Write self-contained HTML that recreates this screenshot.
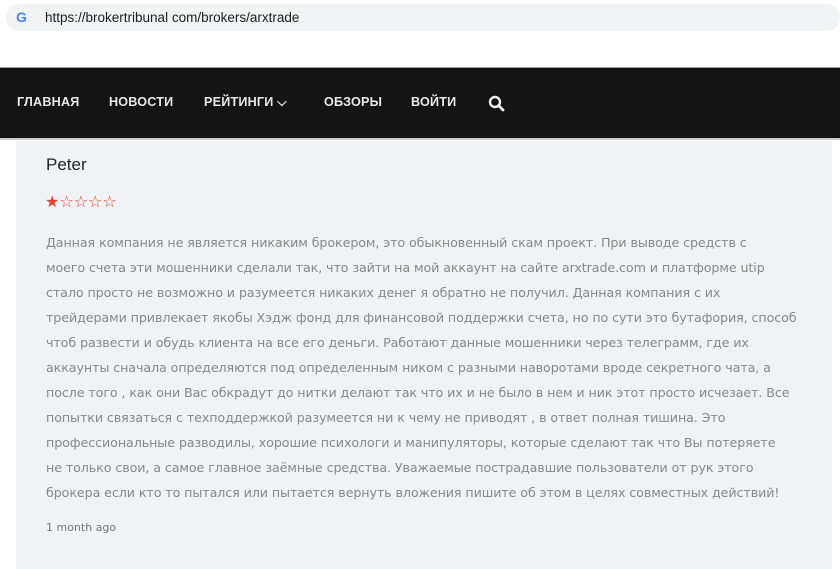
<!DOCTYPE html>
<html><head><meta charset="utf-8"><style>
*{margin:0;padding:0;box-sizing:border-box}
body{width:840px;height:569px;overflow:hidden;background:#fff;font-family:"Liberation Sans","DejaVu Sans",sans-serif;position:relative}
.url{position:absolute;left:6px;top:4px;width:834px;height:27px;background:#f1f3f4;border-radius:14px}
.url .g{position:absolute;left:10px;top:5px;font-weight:bold;font-size:14px;color:#4285f4}
.url .t{position:absolute;left:39px;top:6px;font-size:13.5px;color:#202124}
.nav{position:absolute;left:0;top:67px;width:840px;height:73px;background:#141414;border-top:1px solid #999;border-bottom:2px solid #ccc}
.nav span{position:absolute;top:27px;color:#e8e8e8;font-weight:bold;font-size:12.6px;letter-spacing:0.2px}
.card{position:absolute;left:16px;top:141px;width:816px;height:428px;background:#f0f2f5}
.name{position:absolute;left:46px;top:155px;font-size:17px;color:#222}
.stars{position:absolute;left:45px;top:192px;font-size:16px;color:#e0452f;letter-spacing:0px}
.txt{position:absolute;left:46px;top:230px;font-family:"DejaVu Sans",sans-serif;font-size:12.7px;line-height:25px;color:#888;white-space:nowrap;letter-spacing:-0.1px}
.ago{position:absolute;left:46px;top:521px;font-family:"DejaVu Sans",sans-serif;font-size:11px;color:#777}
</style></head><body>
<div class="url"><span class="g">G</span><span class="t">https://brokertribunal com/brokers/arxtrade</span></div>
<div class="nav">
<span style="left:17px">ГЛАВНАЯ</span>
<span style="left:109px">НОВОСТИ</span>
<span style="left:204px">РЕЙТИНГИ ⌵</span>
<span style="left:324px">ОБЗОРЫ</span>
<span style="left:411px">ВОЙТИ</span>
<svg style="position:absolute;left:488px;top:27px" width="17" height="17" viewBox="0 0 17 17"><circle cx="7" cy="7" r="5" fill="none" stroke="#eee" stroke-width="2.4"/><line x1="10.5" y1="10.5" x2="15" y2="15" stroke="#eee" stroke-width="2.8" stroke-linecap="round"/></svg>
</div>
<div class="card"></div>
<div class="name">Peter</div>
<div class="stars">★☆☆☆☆</div>
<div class="txt">Данная компания не является никаким брокером, это обыкновенный скам проект. При выводе средств с<br>моего счета эти мошенники сделали так, что зайти на мой аккаунт на сайте arxtrade.com и платформе utip<br>стало просто не возможно и разумеется никаких денег я обратно не получил. Данная компания с их<br>трейдерами привлекает якобы Хэдж фонд для финансовой поддержки счета, но по сути это бутафория, способ<br>чтоб развести и обудь клиента на все его деньги. Работают данные мошенники через телеграмм, где их<br>аккаунты сначала определяются под определенным ником с разными наворотами вроде секретного чата, а<br>после того , как они Вас обкрадут до нитки делают так что их и не было в нем и ник этот просто исчезает. Все<br>попытки связаться с техподдержкой разумеется ни к чему не приводят , в ответ полная тишина. Это<br>профессиональные разводилы, хорошие психологи и манипуляторы, которые сделают так что Вы потеряете<br>не только свои, а самое главное заёмные средства. Уважаемые пострадавшие пользователи от рук этого<br>брокера если кто то пытался или пытается вернуть вложения пишите об этом в целях совместных действий!</div>
<div class="ago">1 month ago</div>
</body></html>
